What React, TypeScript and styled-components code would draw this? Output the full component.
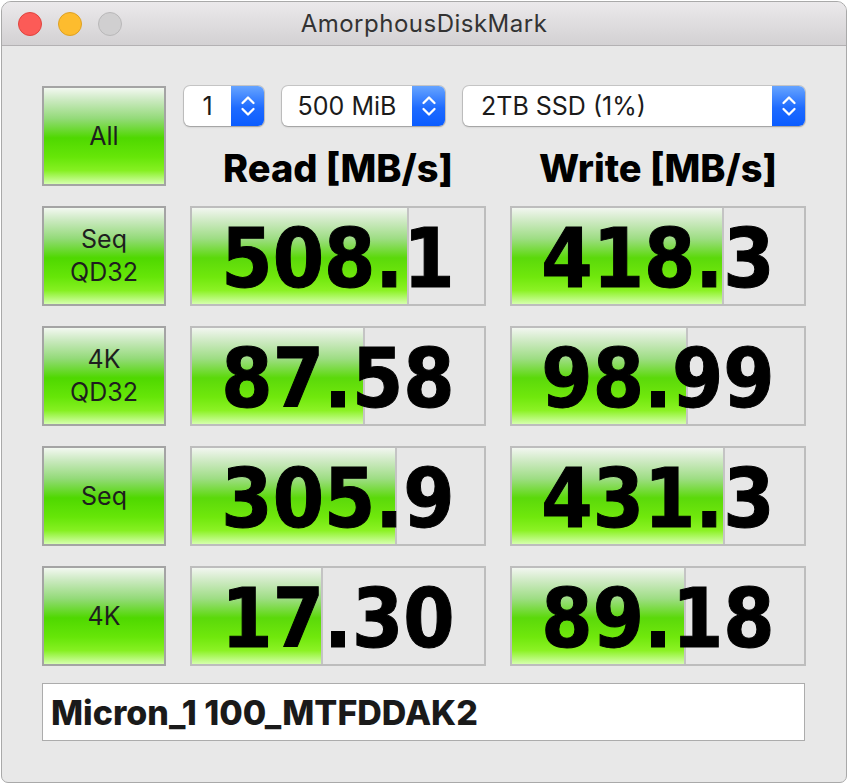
import React from 'react'
import styled, { createGlobalStyle } from 'styled-components'

const GlobalStyle = createGlobalStyle`
  html, body {
    margin: 0;
    padding: 0;
    background: #ffffff;
  }
  * {
    box-sizing: border-box;
  }
`

const Window = styled.div`
  width: 846px;
  height: 782px;
  margin: 1px 0 0 1px;
  border: 1px solid #a9a9a9;
  border-radius: 10px 10px 7px 7px;
  background: #e8e8e8;
  overflow: hidden;
  display: flex;
  flex-direction: column;
  font-family: Inter, "Liberation Sans", sans-serif;
`

const TitleBar = styled.div`
  height: 44px;
  flex: none;
  display: grid;
  grid-template-columns: 1fr auto 1fr;
  align-items: center;
  background: linear-gradient(#ebe9eb, #d3d1d3);
  border-bottom: 1px solid #b3b1b3;
`

const Lights = styled.div`
  display: flex;
  gap: 16px;
  padding-left: 16px;
`

const Light = styled.span<{ $color: string; $edge: string }>`
  width: 24px;
  height: 24px;
  border-radius: 50%;
  background: ${(p) => p.$color};
  border: 1px solid ${(p) => p.$edge};
`

const Title = styled.div`
  font-size: 24px;
  color: #333333;
  letter-spacing: 0.5px;
`

const Body = styled.div`
  padding: 40px 0 0 40px;
  display: grid;
  grid-template-columns: 124px 296px 296px;
  grid-auto-rows: 100px;
  column-gap: 24px;
  row-gap: 20px;
`

const TestButton = styled.div`
  border: 2px solid #a4a4a4;
  background: linear-gradient(
    #f3f8f1 0%,
    #cdeac3 12%,
    #93da78 32%,
    #4fd800 52%,
    #66e608 72%,
    #86f022 86%,
    #d6ffae 100%
  );
  display: flex;
  flex-direction: column;
  align-items: center;
  justify-content: center;
  font-size: 25px;
  line-height: 33px;
  color: #1e1e1e;
`

const Header = styled.div`
  grid-column: 2 / span 2;
  display: flex;
  flex-direction: column;
`

const Selectors = styled.div`
  display: flex;
  gap: 18px;
  margin-left: -6px;
  height: 40px;
`

const Select = styled.div<{ $width: number }>`
  width: ${(p) => p.$width}px;
  height: 40px;
  display: flex;
  background: #ffffff;
  border-radius: 6px;
  box-shadow: 0 0 0 1px rgba(0, 0, 0, 0.14), 0 1px 2px rgba(0, 0, 0, 0.22);
  overflow: hidden;
`

const SelectText = styled.div<{ $left?: boolean }>`
  flex: 1;
  display: flex;
  align-items: center;
  justify-content: ${(p) => (p.$left ? 'flex-start' : 'center')};
  padding-left: ${(p) => (p.$left ? '18px' : '0')};
  font-size: 25px;
  color: #1b1b1b;
`

const Stepper = styled.div`
  width: 33px;
  flex: none;
  display: flex;
  align-items: center;
  justify-content: center;
  background: linear-gradient(#66a4ff, #1e6bff 55%, #0b5cff);
`

const Labels = styled.div`
  display: grid;
  grid-template-columns: 296px 296px;
  column-gap: 24px;
  margin-top: 22px;
`

const Label = styled.div`
  text-align: center;
  font-size: 38px;
  line-height: 40px;
  font-weight: 800;
  color: #000000;
`

const Cell = styled.div`
  position: relative;
  border: 2px solid #bdbdbd;
  background: #e7e7e7;
  overflow: hidden;
  display: flex;
  align-items: center;
  justify-content: center;
`

const Bar = styled.div`
  position: absolute;
  left: 0;
  top: 0;
  bottom: 0;
  border-right: 2px solid #c4c4c4;
  background: linear-gradient(
    #f2f6f0 0%,
    #d2ebc8 12%,
    #9edd84 32%,
    #5bd90a 52%,
    #70e80c 72%,
    #8cf225 86%,
    #d6ffae 100%
  );
`

const Value = styled.div`
  position: relative;
  padding-top: 6px;
  font-family: "DejaVu Sans Condensed", "DejaVu Sans", sans-serif;
  font-stretch: condensed;
  font-weight: 700;
  font-size: 82px;
  line-height: 82px;
  color: #000000;
  -webkit-text-stroke: 1px #000000;
`

const DriveField = styled.div`
  margin: 17px 0 0 40px;
  width: 763px;
  height: 58px;
  border: 1px solid #acacac;
  background: #ffffff;
  display: flex;
  align-items: center;
  padding-left: 8px;
  font-size: 34px;
  font-weight: 800;
  color: #1a1a1a;
  white-space: pre;
`

const Chevrons = () => (
  <svg width="16" height="24" viewBox="0 0 16 24" fill="none">
    <path d="M2.5 9 L8 3.5 L13.5 9" stroke="#fff" strokeWidth="2.3" strokeLinecap="round" strokeLinejoin="round" />
    <path d="M2.5 15 L8 20.5 L13.5 15" stroke="#fff" strokeWidth="2.3" strokeLinecap="round" strokeLinejoin="round" />
  </svg>
)

type Row = { lines: string[]; read: string; readFill: number; write: string; writeFill: number }

const rows: Row[] = [
  { lines: ['Seq', 'QD32'], read: '508.1', readFill: 0.743, write: '418.3', writeFill: 0.726 },
  { lines: ['4K', 'QD32'], read: '87.58', readFill: 0.592, write: '98.99', writeFill: 0.603 },
  { lines: ['Seq'], read: '305.9', readFill: 0.702, write: '431.3', writeFill: 0.729 },
  { lines: ['4K'], read: '17.30', readFill: 0.449, write: '89.18', writeFill: 0.596 },
]

const Result = ({ value, fill }: { value: string; fill: number }) => (
  <Cell>
    <Bar style={{ width: `${fill * 100}%` }} />
    <Value>{value}</Value>
  </Cell>
)

const App = () => {
  return (
    <>
      <GlobalStyle />
      <Window>
        <TitleBar>
          <Lights>
            <Light $color="#fc5b57" $edge="#e0443e" />
            <Light $color="#fdbc2e" $edge="#dea123" />
            <Light $color="#d0cfd0" $edge="#b9b8b9" />
          </Lights>
          <Title>AmorphousDiskMark</Title>
          <div />
        </TitleBar>
        <Body>
          <TestButton>All</TestButton>
          <Header>
            <Selectors>
              <Select $width={80}>
                <SelectText>1</SelectText>
                <Stepper><Chevrons /></Stepper>
              </Select>
              <Select $width={163}>
                <SelectText>500 MiB</SelectText>
                <Stepper><Chevrons /></Stepper>
              </Select>
              <Select $width={342}>
                <SelectText $left>2TB SSD (1%)</SelectText>
                <Stepper><Chevrons /></Stepper>
              </Select>
            </Selectors>
            <Labels>
              <Label>Read [MB/s]</Label>
              <Label>Write [MB/s]</Label>
            </Labels>
          </Header>
          {rows.map((r) => (
            <React.Fragment key={r.lines.join(' ')}>
              <TestButton>
                {r.lines.map((l) => (
                  <span key={l}>{l}</span>
                ))}
              </TestButton>
              <Result value={r.read} fill={r.readFill} />
              <Result value={r.write} fill={r.writeFill} />
            </React.Fragment>
          ))}
        </Body>
        <DriveField>Micron_1 100_MTFDDAK2</DriveField>
      </Window>
    </>
  )
}

export default App
